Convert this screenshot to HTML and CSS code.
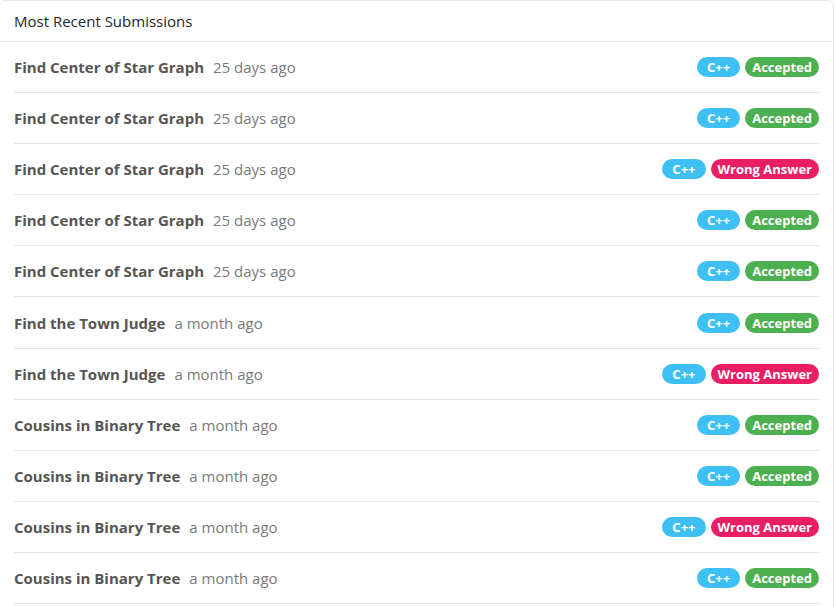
FILE: index.html
```html
<!DOCTYPE html>
<html>
<head>
<meta charset="utf-8">
<link rel="stylesheet" href="styles.css">
</head>
<body>
<div class="card">
  <div class="card-header">Most Recent Submissions</div>
  <ul class="list">
    <li class="row"><span class="title">Find Center of Star Graph</span><span class="time">25 days ago</span><span class="badges"><span class="badge lang">C++</span><span class="badge ok">Accepted</span></span></li>
    <li class="row"><span class="title">Find Center of Star Graph</span><span class="time">25 days ago</span><span class="badges"><span class="badge lang">C++</span><span class="badge ok">Accepted</span></span></li>
    <li class="row"><span class="title">Find Center of Star Graph</span><span class="time">25 days ago</span><span class="badges"><span class="badge lang">C++</span><span class="badge wa">Wrong Answer</span></span></li>
    <li class="row"><span class="title">Find Center of Star Graph</span><span class="time">25 days ago</span><span class="badges"><span class="badge lang">C++</span><span class="badge ok">Accepted</span></span></li>
    <li class="row"><span class="title">Find Center of Star Graph</span><span class="time">25 days ago</span><span class="badges"><span class="badge lang">C++</span><span class="badge ok">Accepted</span></span></li>
    <li class="row"><span class="title">Find the Town Judge</span><span class="time">a month ago</span><span class="badges"><span class="badge lang">C++</span><span class="badge ok">Accepted</span></span></li>
    <li class="row"><span class="title">Find the Town Judge</span><span class="time">a month ago</span><span class="badges"><span class="badge lang">C++</span><span class="badge wa">Wrong Answer</span></span></li>
    <li class="row"><span class="title">Cousins in Binary Tree</span><span class="time">a month ago</span><span class="badges"><span class="badge lang">C++</span><span class="badge ok">Accepted</span></span></li>
    <li class="row"><span class="title">Cousins in Binary Tree</span><span class="time">a month ago</span><span class="badges"><span class="badge lang">C++</span><span class="badge ok">Accepted</span></span></li>
    <li class="row"><span class="title">Cousins in Binary Tree</span><span class="time">a month ago</span><span class="badges"><span class="badge lang">C++</span><span class="badge wa">Wrong Answer</span></span></li>
    <li class="row"><span class="title">Cousins in Binary Tree</span><span class="time">a month ago</span><span class="badges"><span class="badge lang">C++</span><span class="badge ok">Accepted</span></span></li>
  </ul>
</div>
</body>
</html>
```
FILE: styles.css
```css
html, body {
  margin: 0;
  padding: 0;
  background: #fff;
}
body {
  font-family: "Open Sans", "Noto Sans", sans-serif;
  overflow: hidden;
  height: 607px;
}
.card {
  margin-left: -1px;
  width: 835px;
  min-height: 660px;
  border: 1px solid #e6e6e6;
  border-radius: 6px;
  box-sizing: border-box;
  background: #fff;
}
.card-header {
  height: 41px;
  box-sizing: border-box;
  border-bottom: 1px solid #e3e3e3;
  padding: 0 14px;
  display: flex;
  align-items: center;
  font-size: 15px;
  color: #262626;
}
.list {
  list-style: none;
  margin: 0;
  padding: 0 14px;
}
.row {
  height: 51.1px;
  box-sizing: border-box;
  border-bottom: 1px solid #e5e5e5;
  display: flex;
  align-items: center;
}
.title {
  font-weight: 700;
  font-size: 15px;
  color: #555;
}
.time {
  margin-left: 9px;
  font-size: 15px;
  color: #7a7a7a;
}
.badges {
  margin-left: auto;
  display: flex;
  gap: 5px;
}
.badge {
  height: 20px;
  line-height: 20px;
  border-radius: 10px;
  padding: 0 7px;
  font-size: 13px;
  font-weight: 700;
  color: #fff;
}
.lang { background: #3fc0f5; padding: 0 10px; }
.ok { background: #4caf50; }
.wa { background: #e91e63; }
```
